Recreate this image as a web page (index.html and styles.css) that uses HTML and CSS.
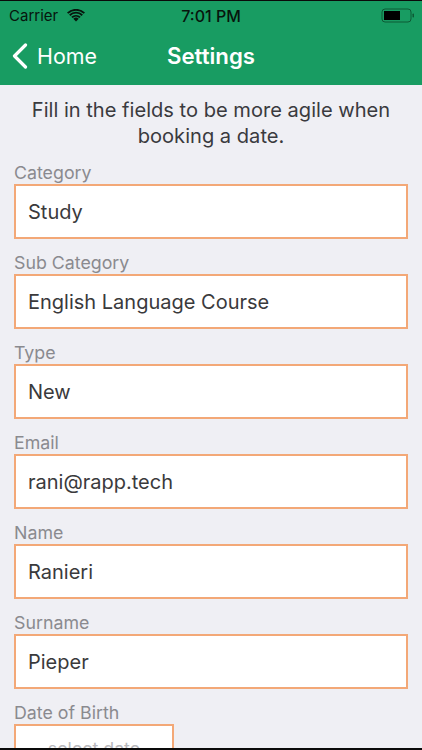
FILE: index.html
```html
<!DOCTYPE html>
<html lang="en">
<head>
<meta charset="utf-8">
<title>Settings</title>
<link rel="stylesheet" href="styles.css">
</head>
<body>
<div class="screen">
  <header class="top">
    <div class="status">
      <div class="status-left">
        <span>Carrier</span>
        <svg class="wifi" viewBox="0 0 18 13" width="18" height="13"><path d="M9 12.6 6.3 9.8a3.9 3.9 0 0 1 5.4 0z" fill="#07150d"/><path d="M4.3 7.8a6.8 6.8 0 0 1 9.4 0l-1.3 1.3a5 5 0 0 0-6.8 0z" fill="#07150d"/><path d="M2.1 5.6a9.9 9.9 0 0 1 13.8 0l-1.3 1.3a8 8 0 0 0-11.2 0z" fill="#07150d"/><path d="M0 3.5a13 13 0 0 1 18 0l-1.3 1.3a11.1 11.1 0 0 0-15.4 0z" fill="#07150d"/></svg>
      </div>
      <span class="clock">7:01 PM</span>
      <svg class="battery" viewBox="0 0 34 15" width="34" height="15"><rect x="1" y="1" width="29" height="13" rx="3" fill="none" stroke="#0d5a35" stroke-width="1"/><rect x="3" y="3" width="16" height="9" fill="#000"/><rect x="31.5" y="5.5" width="1.5" height="4" rx=".7" fill="#0d5a35"/></svg>
    </div>
    <nav class="nav">
      <a class="back">
        <svg viewBox="0 0 16 26" width="16" height="26"><path d="M13.5 2 2.5 13l11 11" fill="none" stroke="#fff" stroke-width="3.2" stroke-linecap="round" stroke-linejoin="round"/></svg>
        <span>Home</span>
      </a>
      <h1 class="title">Settings</h1>
    </nav>
  </header>
  <main class="content">
    <p class="intro">Fill in the fields to be more agile when booking a date.</p>
    <div class="field"><label class="label">Category</label><div class="box">Study</div></div>
    <div class="field"><label class="label">Sub Category</label><div class="box">English Language Course</div></div>
    <div class="field"><label class="label">Type</label><div class="box">New</div></div>
    <div class="field"><label class="label">Email</label><div class="box">rani@rapp.tech</div></div>
    <div class="field"><label class="label">Name</label><div class="box">Ranieri</div></div>
    <div class="field"><label class="label">Surname</label><div class="box">Pieper</div></div>
    <div class="field"><label class="label">Date of Birth</label><div class="box date">select date</div></div>
  </main>
</div>
</body>
</html>
```
FILE: styles.css
```css
* { box-sizing: border-box; }
html, body { margin: 0; padding: 0; height: 100%; overflow: hidden; }
body { font-family: Inter, "Liberation Sans", sans-serif; background: #efeff4; }
.screen { width: 422px; height: 750px; overflow: hidden; border-top: 1px solid #0a0a0a; border-bottom: 2px solid #0a0a0a; }
.top { background: #189c62; height: 84px; }
.status { height: 29px; display: flex; align-items: center; justify-content: space-between; padding: 0 6px 0 9px; position: relative; color: #07150d; font-size: 15px; }
.status-left { display: flex; align-items: center; gap: 9px; }
.wifi { display: block; }
.clock { position: absolute; left: 0; right: 0; text-align: center; font-weight: 500; font-size: 16px; }
.battery { display: block; margin-right: 1px; }
.nav { height: 53px; display: flex; align-items: center; position: relative; padding: 0 0 2px 12px; color: #fff; }
.back { display: flex; align-items: center; gap: 9px; font-size: 21.4px; }
.title { position: absolute; left: 0; right: 0; margin: 0; text-align: center; font-size: 22.2px; font-weight: 600; }
.content { padding: 12px 14px 0; }
.intro { margin: 0 0 13px; font-size: 20.1px; line-height: 26px; text-align: center; color: #3a3a3e; }
.field { height: 90px; }
.label { display: block; height: 22px; font-size: 17.8px; line-height: 22px; color: #8a8a8f; }
.box { height: 55px; border: 2px solid #f3a877; background: #fff; padding-left: 12px; display: flex; align-items: center; font-size: 20px; color: #3a3a3c; }
.date { width: 160px; justify-content: center; padding: 0 0 6px; color: #b9b9bd; font-size: 17.8px; }
```
